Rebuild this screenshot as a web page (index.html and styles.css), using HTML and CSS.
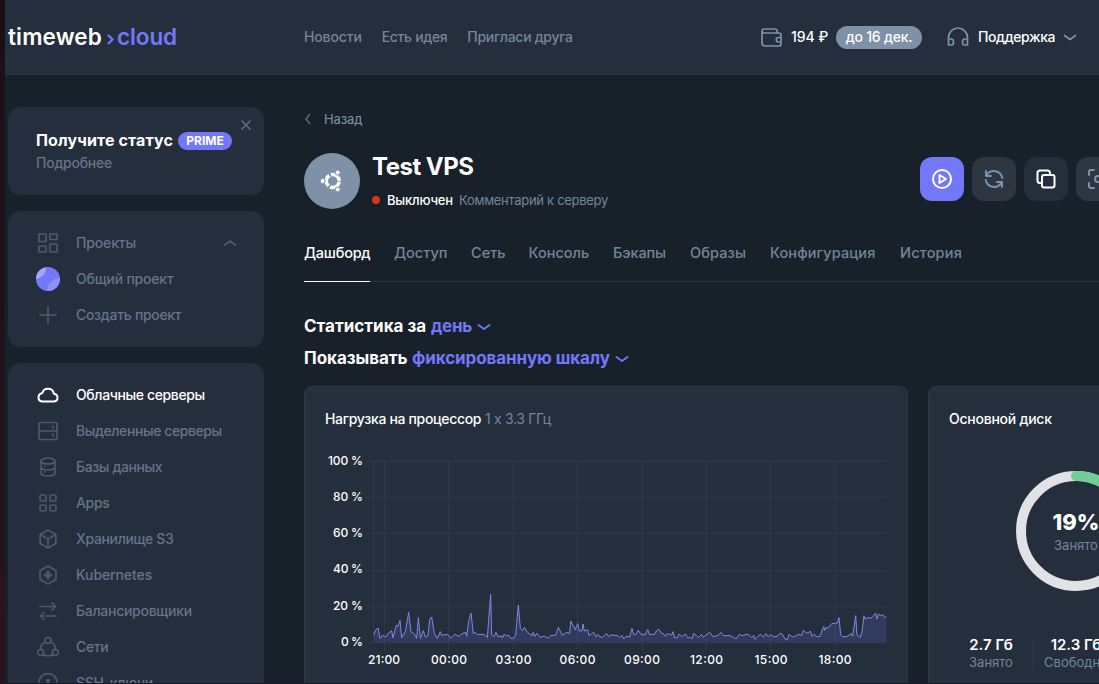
FILE: index.html
```html
<!DOCTYPE html>
<html lang="ru">
<head>
<meta charset="utf-8">
<title>Test VPS</title>
<link rel="stylesheet" href="styles.css">
</head>
<body>
<div class="edge"></div>
<div class="app">
<header class="topbar">
  <div class="logo"><span class="logo-a">timeweb</span><svg class="logo-arrow" width="10" height="16" viewBox="0 0 10 16"><path d="M2 4l4.500 4.500L2 13"/></svg><span class="logo-b">cloud</span></div>
  <nav class="topnav"><a class="n1">Новости</a><a class="n2">Есть идея</a><a class="n3">Пригласи друга</a></nav>
  <svg class="ico wallet" width="24" height="24" viewBox="0 0 24 24"><path d="M2 6v12q0 3 3 3h14q2 0 2-2V10q0-2-2-2H4Q2 8 2 6q0-2 2-2h11q2 0 2 2v2M21 12.500h-2.500a2.200 2.200 0 0 0 0 4.500H21"/></svg>
  <span class="balance">194 ₽</span><span class="until"><span>до 16 дек.</span></span>
  <svg class="ico phones" width="24" height="24" viewBox="0 0 24 24"><path d="M2.500 20v-7.500a9.500 9.500 0 0 1 19 0V20M2.500 14H5q2.500 0 2.500 2.500v1Q7.500 20 5 20H2.500zM21.500 14H19q-2.500 0-2.500 2.500v1q0 2.500 2.500 2.500h2.500z"/></svg>
  <span class="support">Поддержка</span>
  <svg class="ico chev" width="14" height="8" viewBox="0 0 14 8"><path d="M1.500 1.500L7 5.500l5.500-4"/></svg>
</header>
<div class="main">
<aside class="sidebar">
  <section class="box promo">
    <svg class="close" width="12" height="12" viewBox="0 0 12 12"><path d="M1.500 1.500l9 9M10.500 1.500l-9 9"/></svg>
    <div class="promo-title"><b>Получите статус</b><span class="prime"><span>PRIME</span></span></div>
    <div class="promo-sub"><span>Подробнее</span></div>
  </section>
  <section class="box projects">
    <div class="item"><svg class="ico" width="24" height="24" viewBox="0 0 24 24"><path d="M3 3h7v7.500H3zM14 3h7v5.500h-7zM3 15h7v6H3zM14 13h7v8h-7z"/></svg><span class="p1">Проекты</span><svg class="ico up" width="14" height="8" viewBox="0 0 14 8"><path d="M1.500 6L7 2l5.500 4"/></svg></div>
    <div class="item"><svg class="ball" width="24" height="24" viewBox="0 0 24 24"><defs><clipPath id="disc"><circle cx="12" cy="12" r="12"/></clipPath></defs><g clip-path="url(#disc)"><rect width="24" height="24" fill="#7377fa"/><circle cx="-1" cy="1" r="11" fill="#a3a6fb"/><circle cx="24" cy="24" r="13" fill="#8b8efb"/></g></svg><span class="p2">Общий проект</span></div>
    <div class="item"><svg class="ico" width="24" height="24" viewBox="0 0 24 24"><path d="M12 4v16M4 12h16"/></svg><span class="p3">Создать проект</span></div>
  </section>
  <section class="box services">
    <div class="item active"><svg class="ico" width="24" height="24" viewBox="0 0 24 24"><path d="M7 18.500h10.500c2.500 0 4-1.700 4-3.700 0-2.300-1.600-3.800-3.600-4C17.300 7.500 14.800 5.800 12 5.800c-2.800 0-5 1.800-5.600 4.200C4 10.400 2.500 12.300 2.500 14.500c0 2.400 1.900 4 4.500 4z"/></svg><span class="s1">Облачные серверы</span></div>
    <div class="item"><svg class="ico" width="24" height="24" viewBox="0 0 24 24"><rect x="3" y="3.500" width="18" height="17" rx="2"/><path d="M3 12h18M17 7.200v2M17 15.200v2"/></svg><span class="s2">Выделенные серверы</span></div>
    <div class="item"><svg class="ico" width="24" height="24" viewBox="0 0 24 24"><ellipse cx="12" cy="6" rx="7" ry="3"/><path d="M5 6v12c0 1.700 3 3 7 3s7-1.300 7-3V6M5 12c0 1.700 3 3 7 3s7-1.300 7-3M8.500 11v.500M8.500 16.500v.500"/></svg><span class="s3">Базы данных</span></div>
    <div class="item"><svg class="ico" width="24" height="24" viewBox="0 0 24 24"><rect x="4" y="4" width="6" height="6" rx="1.500"/><rect x="14" y="4" width="6" height="6" rx="1.500"/><rect x="4" y="14" width="6" height="6" rx="1.500"/><rect x="14" y="14" width="6" height="6" rx="1.500"/></svg><span class="s4">Apps</span></div>
    <div class="item"><svg class="ico" width="24" height="24" viewBox="0 0 24 24"><path d="M12 3l7.800 4.500v9L12 21l-7.800-4.500v-9zM4.200 7.500L12 12l7.800-4.500M12 12v9"/></svg><span class="s5">Хранилище S3</span></div>
    <div class="item"><svg class="ico" width="24" height="24" viewBox="0 0 24 24"><path d="M12 3l8 4.500v9L12 21l-8-4.500v-9zM12 8v8M8 12h8M10 10l4 4M14 10l-4 4"/></svg><span class="s6">Kubernetes</span></div>
    <div class="item"><svg class="ico" width="24" height="24" viewBox="0 0 24 24"><path d="M4 7.500h15.500M16 4l3.500 3.500L16 11M20 17H4.500M8 13.500L4.500 17 8 20.500"/></svg><span class="s7">Балансировщики</span></div>
    <div class="item"><svg class="ico" width="24" height="24" viewBox="0 0 24 24"><circle cx="12" cy="5.500" r="3"/><circle cx="4.700" cy="17.500" r="3"/><circle cx="19.300" cy="17.500" r="3"/><path d="M9 7a8 8 0 0 0-4.300 7.500M15 7a8 8 0 0 1 4.300 7.500M7 19.800q5 2.200 10 0"/></svg><span class="s8">Сети</span></div>
    <div class="item"><svg class="ico" width="24" height="24" viewBox="0 0 24 24"><circle cx="12" cy="12" r="9.300"/><circle cx="12" cy="10" r="1.200"/><path d="M12 11v5"/></svg><span class="s9">SSH-ключи</span></div>
  </section>
</aside>
<main class="content">
  <div class="back"><svg width="8" height="12" viewBox="0 0 8 12"><path d="M6 1L2 6l4 5"/></svg><span>Назад</span></div>
  <div class="server">
    <div class="avatar"><svg width="24" height="24" viewBox="0 0 24 24"><circle cx="12.700" cy="12" r="6.500" fill="none" stroke="#fff" stroke-width="3.500" stroke-dasharray="11.900 1.713" stroke-dashoffset="-.85"/><g fill="#fff" stroke="#7f91a6" stroke-width="1"><circle cx="2.700" cy="12" r="2.500"/><circle cx="17.700" cy="3.600" r="2.500"/><circle cx="17.700" cy="20.400" r="2.500"/></g></svg></div>
    <div class="info"><h1><span>Test VPS</span></h1><div class="status"><i></i><span class="off">Выключен</span><span class="comment">Комментарий к серверу</span></div></div>
    <div class="actions">
      <button class="act play"><svg width="24" height="24" viewBox="0 0 24 24"><circle cx="12" cy="12" r="9"/><path d="M9.500 8v8l6.500-4z"/></svg></button>
      <button class="act dim"><svg width="24" height="24" viewBox="0 0 24 24"><path d="M4 4v5h5M4.500 8.500A8.500 8.500 0 0 1 20.300 11M20 20v-5h-5M19.500 15.500A8.500 8.500 0 0 1 3.700 13"/></svg></button>
      <button class="act"><svg width="24" height="24" viewBox="0 0 24 24"><rect x="8" y="8" width="12.500" height="12.500" rx="2"/><path d="M7.500 16H6q-2.500 0-2.500-2.500V6Q3.500 3.500 6 3.500h7.500Q16 3.500 16 6v1.500"/></svg></button>
      <button class="act dim"><svg width="24" height="24" viewBox="0 0 24 24"><path d="M3 8V5q0-2 2-2h3M3 16v3q0 2 2 2h3M16 3h3q2 0 2 2v3M21 16v3q0 2-2 2h-3"/><circle cx="12" cy="12" r="3"/></svg></button>
    </div>
  </div>
  <nav class="tabs"><a class="t1 active">Дашборд</a><a class="t2">Доступ</a><a class="t3">Сеть</a><a class="t4">Консоль</a><a class="t5">Бэкапы</a><a class="t6">Образы</a><a class="t7">Конфигурация</a><a class="t8">История</a></nav>
  <div class="filters">
    <div class="filter"><span class="f1">Статистика за</span><a class="f2">день</a><svg width="14" height="8" viewBox="0 0 14 8"><path d="M1.500 2L7 6l5.500-4"/></svg></div>
    <div class="filter"><span class="f3">Показывать</span><a class="f4">фиксированную шкалу</a><svg width="14" height="8" viewBox="0 0 14 8"><path d="M1.500 2L7 6l5.500-4"/></svg></div>
  </div>
  <div class="cards">
    <section class="card">
      <h2><span class="c1">Нагрузка на процессор</span> <span class="c2">1 x 3.3 ГГц</span></h2>
      <svg class="chart" width="562" height="220" viewBox="325 450 562 220">
        <g class="grid"><path d="M366 461.500h521M366 497.500h521M366 533.500h521M366 570.500h521M366 606.500h521M366 642.500h521M373.500 461v181M384.500 461v189M448.500 461v189M513.500 461v189M577.500 461v189M642.500 461v189M706.500 461v189M770.500 461v189M835.500 461v189"/></g>
        <g transform="translate(300 445) scale(.33333)">
          <path class="area" d="M221 592V570L227 555 234 549 240 580 248 571 258 576 264 566 275 557 279 579 289 541 294 544 300 526 305 578 316 560 326 502 333 560 344 568 350 580 355 517 361 580 370 557 376 576 384 572 389 523 395 516 403 565 412 580 421 560 425 571 435 569 443 568 452 579 465 568 476 574 490 564 497 562 500 574 506 529 513 504 520 566 526 562 532 568 553 569 562 578 572 448 575 570 581 576 588 562 594 575 605 573 607 579 612 568 620 573 625 570 632 579 641 580 647 570 655 480 661 550 668 557 673 547 683 563 697 572 699 562 705 574 711 565 721 577 733 573 744 580 752 572 768 570 775 547 787 571 800 562 809 566 812 528 826 554 833 536 838 558 846 557 849 537 853 558 863 554 867 572 881 562 888 576 894 568 900 576 907 577 919 565 926 575 932 570 953 572 959 578 966 571 971 582 978 574 989 576 996 550 1000 567 1007 569 1015 556 1022 567 1035 570 1043 553 1048 568 1064 568 1070 557 1077 553 1083 563 1092 568 1096 574 1101 566 1115 570 1119 560 1124 579 1132 578 1138 567 1145 575 1157 567 1162 578 1171 577 1176 582 1181 565 1195 578 1205 568 1210 577 1218 570 1229 562 1239 575 1255 571 1263 562 1270 572 1290 572 1298 576 1304 580 1310 580 1318 568 1326 572 1344 567 1355 577 1361 571 1365 583 1374 574 1381 568 1391 576 1398 566 1405 575 1412 569 1420 575 1432 574 1440 565 1448 568 1455 582 1462 584 1467 568 1478 576 1488 573 1493 568 1505 571 1510 556 1516 562 1525 565 1531 558 1536 574 1543 568 1549 575 1560 574 1567 555 1571 545 1574 556 1578 548 1585 549 1595 536 1612 534 1617 518 1622 569 1628 575 1640 575 1654 566 1658 574 1667 512 1671 570 1681 577 1686 560 1692 512 1696 523 1700 519 1716 518 1727 504 1731 522 1736 507 1742 512 1749 509 1755 518 1759 515V592z"/>
          <path class="line" d="M221 570L227 555 234 549 240 580 248 571 258 576 264 566 275 557 279 579 289 541 294 544 300 526 305 578 316 560 326 502 333 560 344 568 350 580 355 517 361 580 370 557 376 576 384 572 389 523 395 516 403 565 412 580 421 560 425 571 435 569 443 568 452 579 465 568 476 574 490 564 497 562 500 574 506 529 513 504 520 566 526 562 532 568 553 569 562 578 572 448 575 570 581 576 588 562 594 575 605 573 607 579 612 568 620 573 625 570 632 579 641 580 647 570 655 480 661 550 668 557 673 547 683 563 697 572 699 562 705 574 711 565 721 577 733 573 744 580 752 572 768 570 775 547 787 571 800 562 809 566 812 528 826 554 833 536 838 558 846 557 849 537 853 558 863 554 867 572 881 562 888 576 894 568 900 576 907 577 919 565 926 575 932 570 953 572 959 578 966 571 971 582 978 574 989 576 996 550 1000 567 1007 569 1015 556 1022 567 1035 570 1043 553 1048 568 1064 568 1070 557 1077 553 1083 563 1092 568 1096 574 1101 566 1115 570 1119 560 1124 579 1132 578 1138 567 1145 575 1157 567 1162 578 1171 577 1176 582 1181 565 1195 578 1205 568 1210 577 1218 570 1229 562 1239 575 1255 571 1263 562 1270 572 1290 572 1298 576 1304 580 1310 580 1318 568 1326 572 1344 567 1355 577 1361 571 1365 583 1374 574 1381 568 1391 576 1398 566 1405 575 1412 569 1420 575 1432 574 1440 565 1448 568 1455 582 1462 584 1467 568 1478 576 1488 573 1493 568 1505 571 1510 556 1516 562 1525 565 1531 558 1536 574 1543 568 1549 575 1560 574 1567 555 1571 545 1574 556 1578 548 1585 549 1595 536 1612 534 1617 518 1622 569 1628 575 1640 575 1654 566 1658 574 1667 512 1671 570 1681 577 1686 560 1692 512 1696 523 1700 519 1716 518 1727 504 1731 522 1736 507 1742 512 1749 509 1755 518 1759 515"/>
        </g>
        <g class="ylab"><text x="328" y="465" textLength="35">100 %</text><text x="333" y="501" textLength="30">80 %</text><text x="333" y="537" textLength="30">60 %</text><text x="333" y="573" textLength="30">40 %</text><text x="333" y="610" textLength="30">20 %</text><text x="341" y="646" textLength="22">0 %</text></g>
        <g class="xlab"><text x="368" y="664" textLength="32">21:00</text><text x="431" y="664" textLength="36">00:00</text><text x="495.500" y="664" textLength="36">03:00</text><text x="559.500" y="664" textLength="36">06:00</text><text x="624" y="664" textLength="36">09:00</text><text x="690" y="664" textLength="33">12:00</text><text x="754.500" y="664" textLength="33">15:00</text><text x="818.500" y="664" textLength="33">18:00</text></g>
      </svg>
    </section>
    <section class="card disk">
      <h2><span class="c3">Основной диск</span></h2>
      <div class="donut">
        <svg width="120" height="120" viewBox="0 0 120 120"><circle cx="60" cy="60" r="55" stroke="#e1e2e6"/><circle cx="60" cy="60" r="55" stroke="#6fcf97" stroke-linecap="round" pathLength="100" stroke-dasharray="19 81" transform="rotate(-90 60 60)"/></svg>
        <div class="donut-text"><b>19%</b><span>Занято</span></div>
      </div>
      <div class="disk-stats"><div><b class="d1">2.7 Гб</b><span class="d2">Занято</span></div><div><b class="d3">12.3 Гб</b><span class="d4">Свободно</span></div></div>
    </section>
  </div>
</main>
</div>
</div>
<div class="bottom-edge"></div>
</body>
</html>
```

FILE: styles.css
```css
* { box-sizing: border-box; }
body { margin: 0; width: 1099px; height: 684px; overflow: hidden; display: grid; grid-template: 683px 1px / 5px 1094px; background: #18212a; font-family: Inter, "Noto Sans", sans-serif; font-size: 14px; color: #fff; }
.edge { background: linear-gradient(#1b1016, #28141c); }
.app { min-width: 0; overflow: hidden; display: flex; flex-direction: column; }
.bottom-edge { grid-column: 1 / 3; background: #19172a; }
svg { flex: none; fill: none; }
span, a, b { white-space: nowrap; }

.topbar { flex: none; height: 75px; background: #242e3c; border-bottom: 1px solid #2a3541; display: flex; align-items: center; padding-left: 3px; }
.logo { width: 296px; display: flex; align-items: center; font-size: 22.500px; font-weight: 600; line-height: 28px; padding-bottom: 1px; }
.logo-a { width: 95px; letter-spacing: .15px; }
.logo-arrow { margin: 4px 1px 0 3px; stroke: #7377fa; stroke-width: 2.200; }
.logo-b { color: #7377fa; letter-spacing: -.1px; }
.topnav { display: flex; gap: 20px; color: #74859a; width: 456px; padding-bottom: 2px; font-weight: 500; }
.n1 { letter-spacing: -.15px; }
.n2 { letter-spacing: -.33px; }
.n3 { letter-spacing: -.3px; }
.ico { stroke: #4c5969; stroke-width: 1.700; stroke-linejoin: round; stroke-linecap: round; }
.topbar .ico { stroke: #7f91a6; }
.wallet { margin-right: 7px; }
.balance { width: 45px; font-weight: 500; letter-spacing: -.1px; padding-bottom: 2px; }
.until { width: 86px; height: 23px; border-radius: 12px; background: #7f91a6; display: flex; align-items: center; justify-content: center; font-weight: 500; padding-bottom: 1px; letter-spacing: -.2px; }
.phones { margin: 0 8px 0 24px; }
.support { width: 77px; font-weight: 500; letter-spacing: -.4px; padding-bottom: 2px; }
.chev { margin-left: 8px; margin-top: 2px; }

.main { flex: 1; min-height: 0; display: flex; padding: 32px 0 0 3px; }
.sidebar { flex: none; width: 256px; margin-right: 40px; display: flex; flex-direction: column; gap: 16px; color: #667487; }
.box { flex: none; background: #242e3c; border-radius: 12px; padding: 14px 28px; }
.promo { position: relative; height: 88px; padding-top: 22px; }
.close { position: absolute; right: 12px; top: 12px; stroke: #5d6a79; stroke-width: 1.700; }
.promo-title { display: flex; align-items: center; gap: 5px; height: 23px; color: #fff; font-size: 16px; }
.promo-title b { letter-spacing: .13px; padding-bottom: 1px; }
.prime { width: 54px; height: 18px; border-radius: 9px; background: #7377fa; font-size: 12px; font-weight: 700; display: flex; align-items: center; justify-content: center; }
.promo-sub { line-height: 22px; font-size: 14px; font-weight: 500; letter-spacing: -.25px; }
.projects { height: 136px; }
.services { height: 352px; }
.item { height: 36px; display: flex; align-items: center; gap: 16px; font-weight: 500; }
.item span { padding-bottom: 1px; }
.p1 { letter-spacing: -.15px; }
.p2 { letter-spacing: -.2px; }
.p3 { letter-spacing: -.3px; }
.s1 { letter-spacing: -.38px; }
.s2 { letter-spacing: -.42px; }
.s3 { letter-spacing: -.4px; }
.s4 { letter-spacing: -.35px; }
.s5 { letter-spacing: -.35px; }
.s6 { letter-spacing: -.1px; }
.s7 { letter-spacing: -.28px; }
.s8 { letter-spacing: -.35px; }
.s9 { letter-spacing: -.3px; }
.item .up { margin-left: auto; margin-right: -1px; }
.active { color: #fff; }
.active .ico { stroke: #fff; stroke-width: 2; }

.content { flex: none; width: 920px; }
.back { height: 24px; display: flex; align-items: center; gap: 12px; color: #7f91a6; font-size: 13px; }
.back svg { stroke: #5d6a79; stroke-width: 1.500; }
.back span { letter-spacing: -.1px; }
.server { display: flex; margin-top: 22px; height: 56px; }
.avatar { width: 56px; height: 56px; border-radius: 50%; background: #7f91a6; display: flex; align-items: center; justify-content: center; }
.info { width: 548px; margin-left: 12px; }
h1 { margin: 0; font-size: 24px; line-height: 28px; font-weight: 700; letter-spacing: -.5px; }
.status { display: flex; align-items: center; height: 17px; margin-top: 10px; font-size: 13px; }
.status i { width: 8px; height: 8px; border-radius: 50%; background: #d6350f; margin-right: 7px; }
.off { width: 65px; margin-right: 7px; font-weight: 500; letter-spacing: -.2px; }
.comment { color: #74859a; letter-spacing: -.3px; }
.actions { display: flex; gap: 8px; padding-top: 4px; }
.act { flex: none; width: 44px; height: 44px; border: 0; border-radius: 12px; background: #242e3c; padding: 0; display: flex; align-items: center; justify-content: center; }
.act svg { stroke: #fff; stroke-width: 2; stroke-linecap: round; stroke-linejoin: round; }
.act.play { background: #7377fa; }
.act.dim { background: #2d3642; }
.act.dim svg { stroke: #7f91a6; }
.tabs { display: flex; gap: 24px; height: 51px; margin-top: 22px; border-bottom: 1px solid #2c3742; line-height: 44px; font-size: 14.500px; font-weight: 500; color: #74859a; }
.tabs a { height: 51px; }
.tabs .active { border-bottom: 1px solid #fff; }
.t1 { width: 66px; letter-spacing: -.25px; }
.t2 { width: 53px; }
.t3 { width: 33.500px; }
.t4 { width: 60.500px; }
.t5 { width: 53px; letter-spacing: -.1px; }
.t6 { width: 56px; letter-spacing: .1px; }
.t7 { width: 106px; letter-spacing: .1px; }
.t8 { letter-spacing: .2px; }
.filters { margin-top: 28px; height: 64px; }
.filter { display: flex; align-items: center; height: 32px; font-size: 17px; font-weight: 700; }
.filter a { color: #7377fa; margin-left: 6px; }
.filter svg { margin: 2px 0 0 5px; stroke: #7377fa; stroke-width: 1.800; stroke-linecap: round; stroke-linejoin: round; }
.f1 { width: 121px; }
.f2 { width: 41px; letter-spacing: -.3px; }
.f3 { width: 102px; letter-spacing: -.05px; }
.f4 { width: 198px; letter-spacing: -.1px; }
.cards { display: flex; gap: 20px; margin-top: 12px; }
.card { flex: none; width: 604px; height: 340px; padding: 20px; border: 1px solid #2d3945; border-radius: 8px; background: #242e3c; }
.card h2 { margin: 0; font-size: 14px; line-height: 24px; font-weight: 500; }
.c1 { letter-spacing: -.33px; }
.c2 { color: #74859a; font-weight: 400; letter-spacing: -.3px; }
.c3 { letter-spacing: -.25px; }
.chart { display: block; margin-top: 19px; }
.grid { stroke: #2e3945; }
.area { fill: #7377fa; fill-opacity: .18; }
.line { stroke: #8785e2; stroke-width: 3; stroke-linejoin: round; }
.chart text { fill: #fff; font-size: 12px; font-weight: 500; }
.disk { width: 296px; }
.donut { display: grid; width: 120px; margin: 40px auto 0; }
.donut circle { stroke-width: 10; }
.donut > * { grid-area: 1 / 1; }
.donut-text { display: flex; flex-direction: column; align-items: center; padding-top: 37px; }
.donut-text b { font-size: 22px; line-height: 28px; font-weight: 800; }
.donut-text span { font-size: 13px; line-height: 19px; color: #74859a; }
.disk-stats { display: grid; grid-template-columns: repeat(3, 85px); height: 36px; margin-top: 44px; }
.disk-stats div { display: flex; flex-direction: column; align-items: center; border-right: 1px solid #2e3945; }
.disk-stats b { font-size: 15px; line-height: 20px; font-weight: 600; }
.disk-stats span { font-size: 13px; line-height: 15px; color: #74859a; }
```
